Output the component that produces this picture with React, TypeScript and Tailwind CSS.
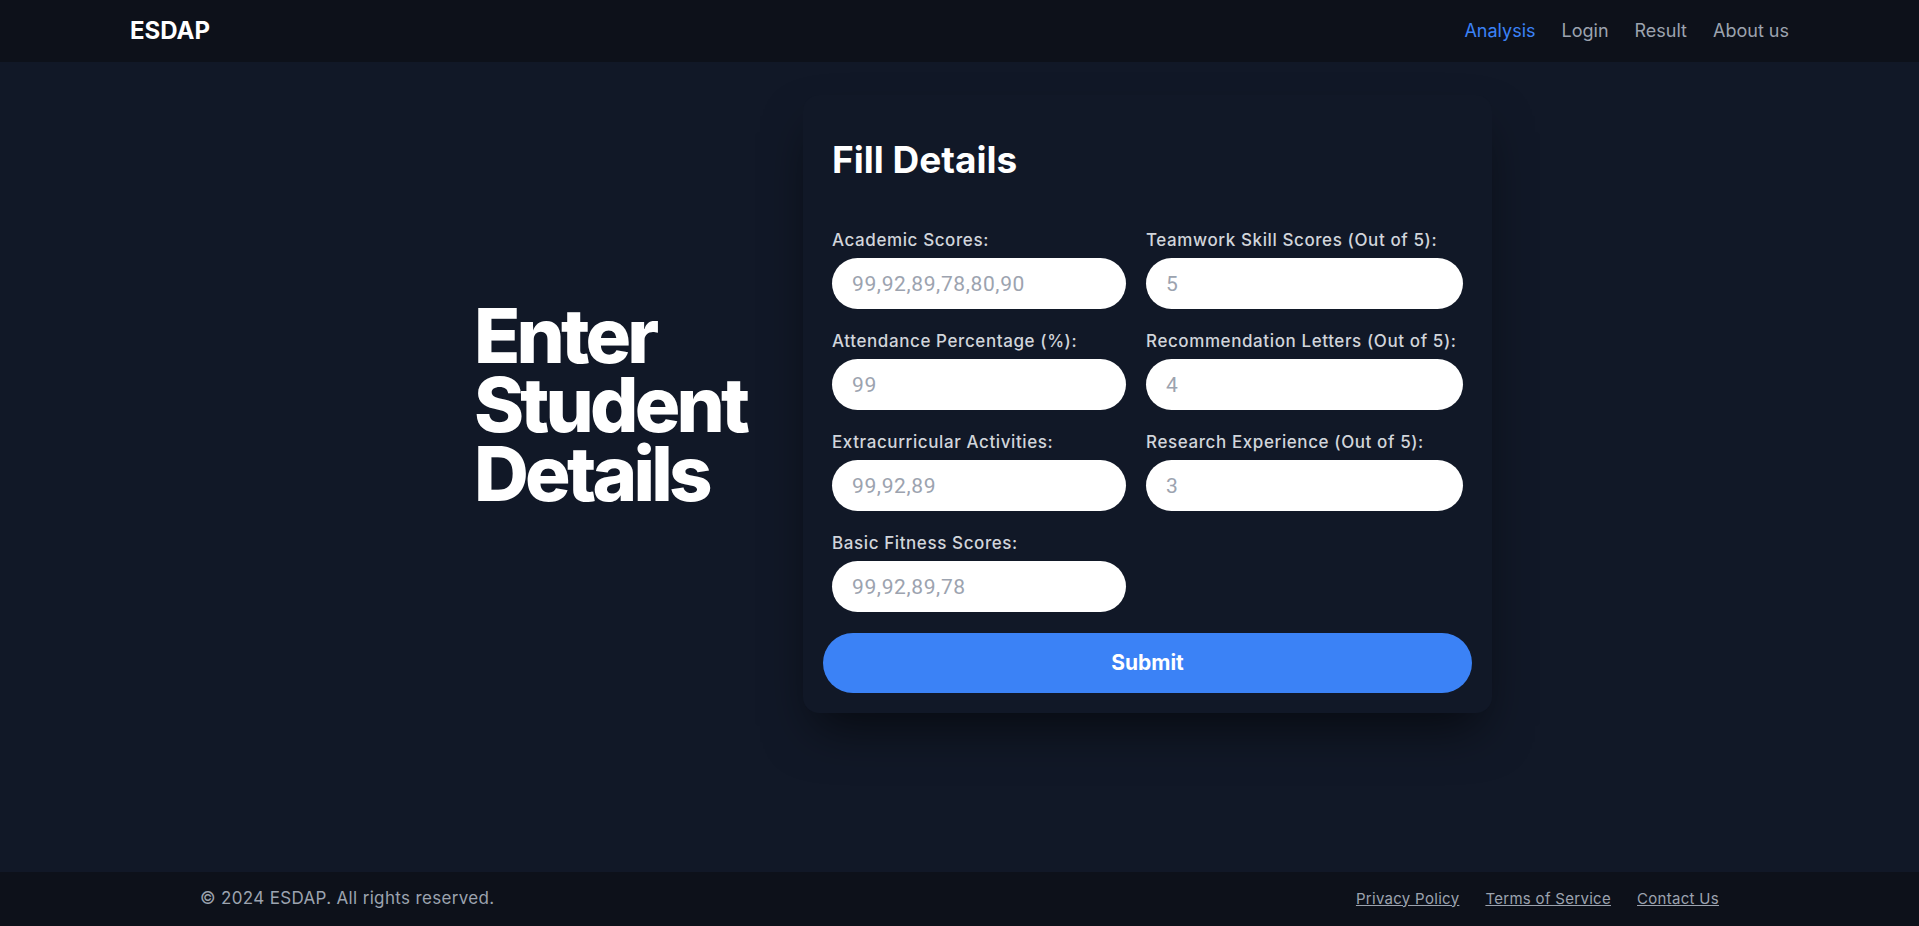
import React from 'react';

const fields = [
  { label: 'Academic Scores:', placeholder: '99,92,89,78,80,90' },
  { label: 'Teamwork Skill Scores (Out of 5):', placeholder: '5' },
  { label: 'Attendance Percentage (%):', placeholder: '99' },
  { label: 'Recommendation Letters (Out of 5):', placeholder: '4' },
  { label: 'Extracurricular Activities:', placeholder: '99,92,89' },
  { label: 'Research Experience (Out of 5):', placeholder: '3' },
  { label: 'Basic Fitness Scores:', placeholder: '99,92,89,78' },
];

export default function App() {
  return (
    <div className="min-h-screen flex flex-col bg-[#111827] font-['Inter',sans-serif]">
      {/* Navbar */}
      <header className="h-[62px] bg-[#0d111a] flex items-center justify-between px-[130px]">
        <span className="text-2xl font-bold text-white">ESDAP</span>
        <nav className="flex items-center gap-[26px] text-lg">
          <a className="text-[#3b82f6]">Analysis</a>
          <a className="text-[#9ca3af]">Login</a>
          <a className="text-[#9ca3af]">Result</a>
          <a className="text-[#9ca3af]">About us</a>
        </nav>
      </header>

      {/* Main */}
      <main className="flex-1 pt-[33px]">
        <div className="flex items-center justify-center pl-[47px]">
          <div className="w-[329px]">
            <h2 className="text-[76px] leading-[69px] font-extrabold tracking-[-0.05em] text-white">
              Enter
              <br />
              Student
              <br />
              Details
            </h2>
          </div>

          <div className="w-[689px] rounded-2xl bg-[#111827] p-5 shadow-2xl shadow-black/60">
            <h1 className="px-[9px] mt-[25px] mb-[48px] text-[37px] leading-10 font-bold text-white">Fill Details</h1>
            <div className="grid grid-cols-[294px_1fr] gap-x-5 gap-y-5 px-[9px]">
              {fields.map((f) => (
                <div key={f.label} className="flex flex-col">
                  <label className="mb-[6px] text-[17px] leading-6 font-medium tracking-[0.035em] text-[#d1d5db] whitespace-nowrap">
                    {f.label}
                  </label>
                  <input
                    placeholder={f.placeholder}
                    className="h-[51px] w-full rounded-full bg-white px-5 font-['Roboto',sans-serif] text-[21px] tracking-[0.03em] text-gray-900 placeholder:text-[#9ca3af] outline-none"
                  />
                </div>
              ))}
            </div>
            <button className="mt-[21px] h-[60px] w-full rounded-full bg-[#3b82f6] text-[21px] font-bold text-white">
              Submit
            </button>
          </div>
        </div>
      </main>

      {/* Footer */}
      <footer className="h-[54px] bg-[#0d111a] flex items-center justify-between px-[200px]">
        <p className="text-[17px] tracking-[0.02em] text-[#9ca3af]">© 2024 ESDAP. All rights reserved.</p>
        <div className="flex items-center gap-[26px] text-[15px] tracking-[0.02em] text-[#9ca3af]">
          <a className="underline">Privacy Policy</a>
          <a className="underline">Terms of Service</a>
          <a className="underline">Contact Us</a>
        </div>
      </footer>
    </div>
  );
}
